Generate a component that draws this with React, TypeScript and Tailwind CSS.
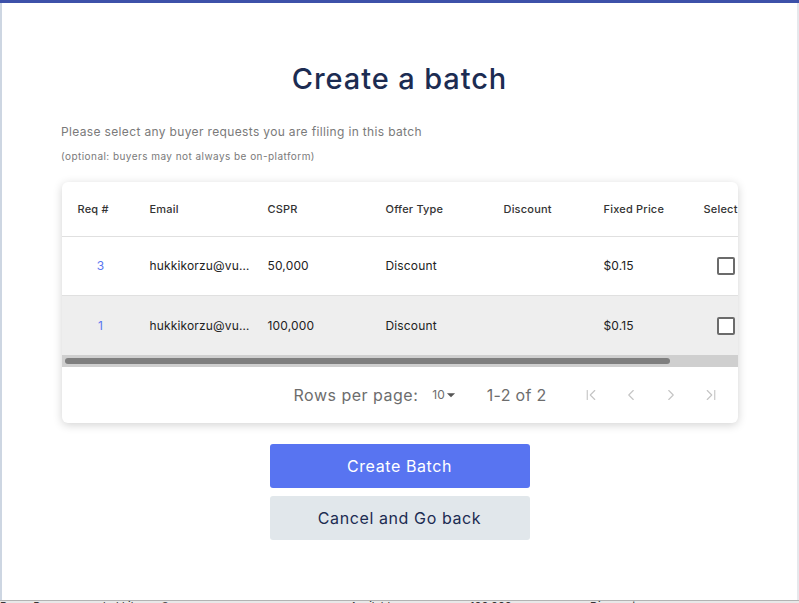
import { ChevronFirst, ChevronLast, ChevronLeft, ChevronRight } from 'lucide-react';

const rows = [
	{ id: 3, email: 'hukkikorzu@vu…', cspr: '50,000', offer: 'Discount', discount: '', price: '$0.15' },
	{ id: 1, email: 'hukkikorzu@vu…', cspr: '100,000', offer: 'Discount', discount: '', price: '$0.15' },
];

const headers = [
	{ label: 'Req #', w: 'w-[72px] min-w-[72px]' },
	{ label: 'Email', w: 'w-[118px] min-w-[118px]' },
	{ label: 'CSPR', w: 'w-[118px] min-w-[118px]' },
	{ label: 'Offer Type', w: 'w-[118px] min-w-[118px]' },
	{ label: 'Discount', w: 'w-[100px] min-w-[100px]' },
	{ label: 'Fixed Price', w: 'w-[100px] min-w-[100px]' },
	{ label: 'Select', w: 'w-[76px] min-w-[76px]' },
];

const App = () => {
	return (
		<div
			className="flex h-[603px] w-[799px] flex-col overflow-hidden bg-white"
			style={{ fontFamily: 'Inter, "Noto Sans", sans-serif' }}
		>
			<div className="h-[3px] bg-[#3d51a9]" />
			<div className="flex flex-1 flex-row">
				<div className="flex w-[797px] flex-col items-center border-l-2 border-[#cdd6e2] bg-white">
					<h1 className="mt-[58px] text-[29px] font-medium leading-[36px] tracking-[0.9px] text-[#1c2c52]">
						Create a batch
					</h1>
					<div className="mt-[26px] w-full pl-[59px] text-[#7a7a7a]">
						<p className="text-[12px] leading-[18px] tracking-[0.35px]">
							Please select any buyer requests you are filling in this batch
						</p>
						<p className="mt-[8px] text-[10px] leading-[14px] tracking-[0.45px]">
							(optional: buyers may not always be on-platform)
						</p>
					</div>

					<div className="mt-[19px] flex w-[676px] flex-col overflow-hidden rounded-[6px] bg-white shadow-[0_2px_10px_rgba(0,0,0,0.18)]">
						<div className="flex flex-col overflow-hidden">
							<div className="flex h-[55px] items-center border-b border-[#e0e0e0]">
								{headers.map((h) => (
									<span
										key={h.label}
										className={`${h.w} whitespace-nowrap pl-[16px] text-[11px] font-medium tracking-[0.2px] text-[#333]`}
									>
										{h.label}
									</span>
								))}
							</div>
							{rows.map((r, i) => (
								<div
									key={r.id}
									className={`flex h-[59px] items-center text-[12px] tracking-[0.15px] text-[#222] ${
										i === 1 ? 'bg-[#eeeeee]' : 'border-b border-[#e0e0e0] bg-white'
									}`}
								>
									<span className="w-[72px] min-w-[72px] pl-[6px] text-center text-[#5b77f0]">
										{r.id}
									</span>
									<span className="w-[118px] min-w-[118px] whitespace-nowrap pl-[16px]">
										{r.email}
									</span>
									<span className="w-[118px] min-w-[118px] pl-[16px]">{r.cspr}</span>
									<span className="w-[118px] min-w-[118px] pl-[16px]">{r.offer}</span>
									<span className="w-[100px] min-w-[100px] pl-[16px]">{r.discount}</span>
									<span className="w-[100px] min-w-[100px] pl-[16px]">{r.price}</span>
									<span className="flex w-[76px] min-w-[76px] justify-center">
										<span className="h-[18px] w-[18px] rounded-[2px] border-2 border-[#6b6b6b] bg-white" />
									</span>
								</div>
							))}
						</div>
						<div className="flex h-[12px] items-center bg-[#cfcfcf] pl-[3px]">
							<div className="h-[6px] w-[605px] rounded-full bg-[#7f7f7f]" />
						</div>
						<div className="flex h-[56px] items-center justify-end pr-[18px] text-[#6d6d6d]">
							<span className="text-[16px] tracking-[0.5px]">Rows per page:</span>
							<span className="ml-[14px] flex items-center text-[12px]">
								10
								<svg width="14" height="14" viewBox="0 0 24 24" className="-ml-[1px]">
									<path d="M5 9l7 7 7-7z" fill="#555" />
								</svg>
							</span>
							<span className="ml-[29px] text-[16px] tracking-[0.3px]">1-2 of 2</span>
							<div className="ml-[35px] flex items-center gap-[22px] text-[#c4c4c4]">
								<ChevronFirst size={18} strokeWidth={1.5} />
								<ChevronLeft size={18} strokeWidth={1.5} />
								<ChevronRight size={18} strokeWidth={1.5} />
								<ChevronLast size={18} strokeWidth={1.5} />
							</div>
						</div>
					</div>

					<button className="mt-[21px] flex h-[44px] w-[260px] items-center justify-center rounded-[3px] bg-[#5874f1] text-[16px] tracking-[0.6px] text-white">
						Create Batch
					</button>
					<button className="mt-[8px] flex h-[44px] w-[260px] items-center justify-center rounded-[3px] bg-[#e1e7eb] text-[16px] tracking-[0.6px] text-[#1c2c52]">
						Cancel and Go back
					</button>
				</div>
				<div className="flex-1 bg-[#e6e8ec]" />
			</div>
			<div className="h-[3px] overflow-hidden border-t border-[#b3b3b3] bg-[#e8e8e8]">
				<div className="-mt-[2px] flex whitespace-nowrap text-[11px] leading-[14px] text-[#333]">
					<span className="w-[103px]">Buyer Reqs</span>
					<span className="w-[247px]">hukkikorzu@vuz</span>
					<span className="w-[120px]">Available</span>
					<span className="w-[120px]">100,000</span>
					<span>Discount</span>
				</div>
			</div>
		</div>
	);
};

export default App;
